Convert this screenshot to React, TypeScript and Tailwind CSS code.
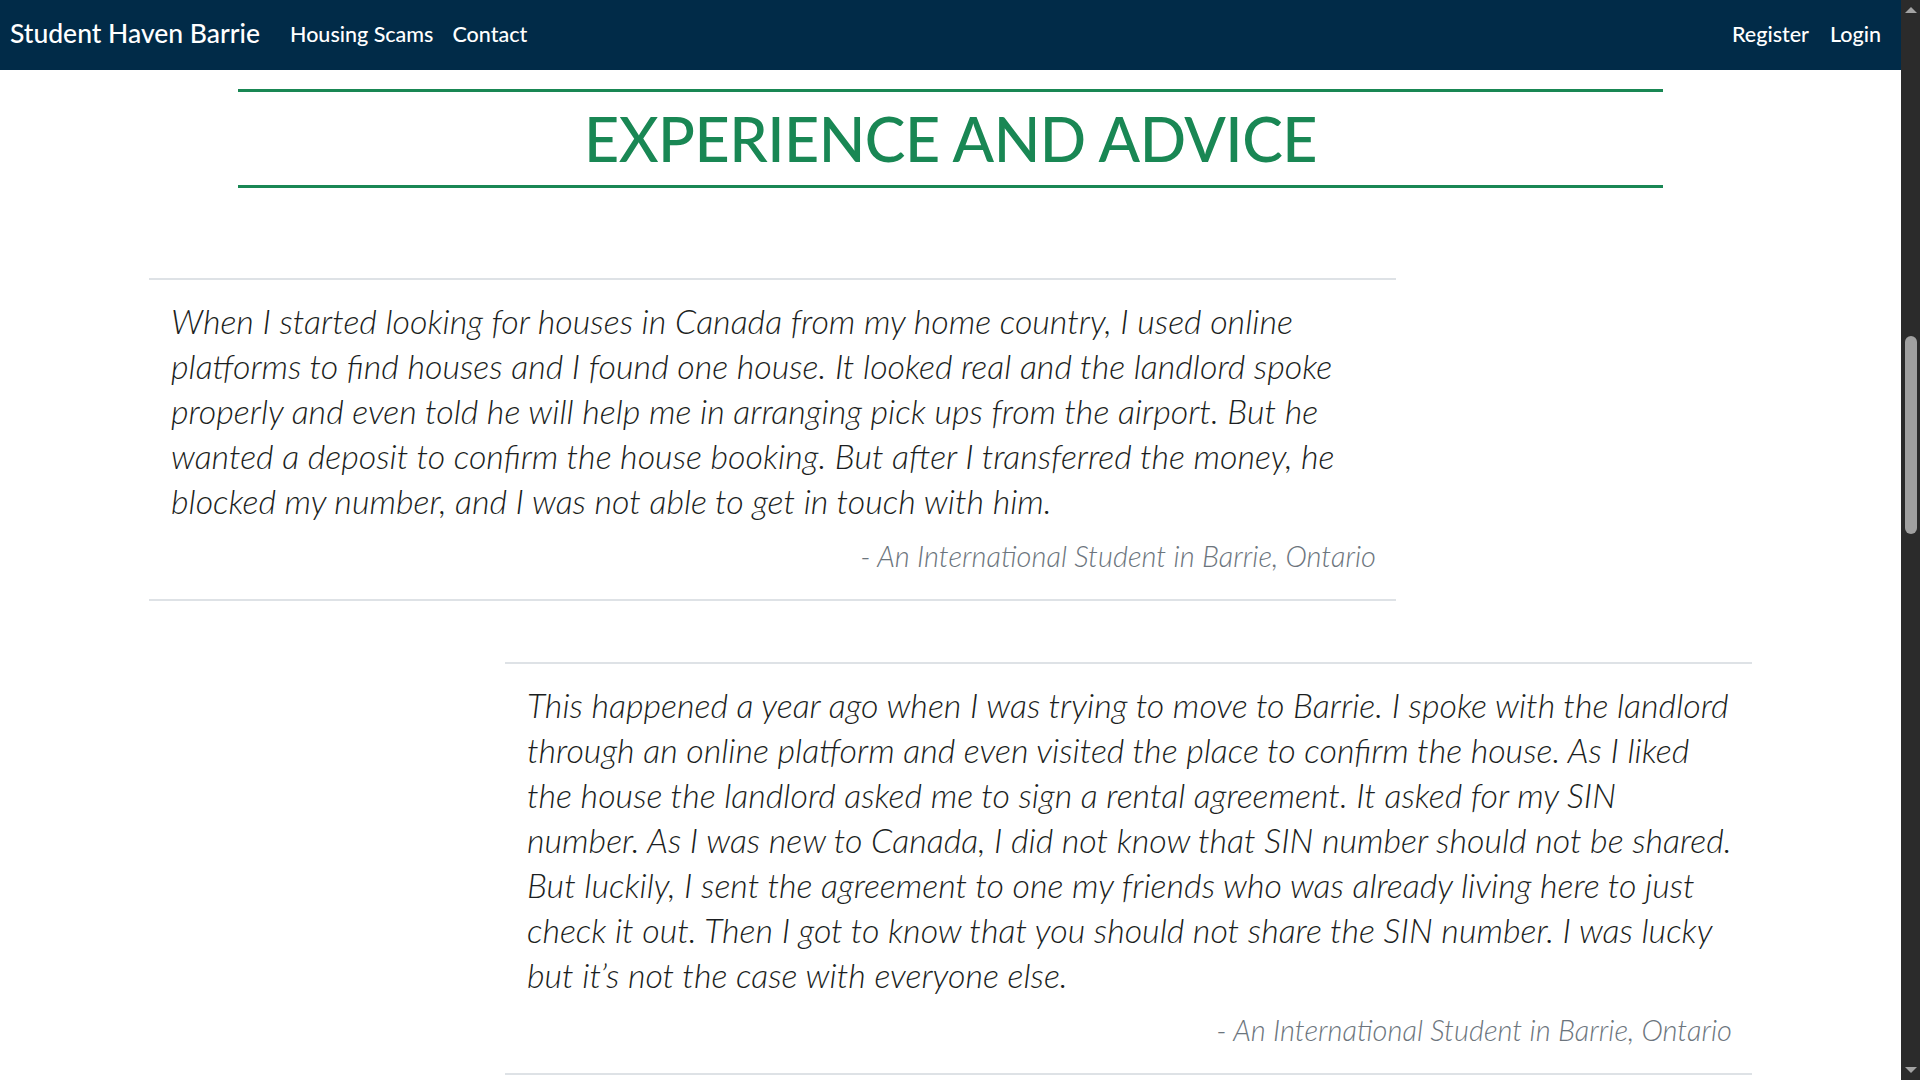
import React from "react";

const stories = [
  {
    lines: [
      "When I started looking for houses in Canada from my home country, I used online",
      "platforms to find houses and I found one house. It looked real and the landlord spoke",
      "properly and even told he will help me in arranging pick ups from the airport. But he",
      "wanted a deposit to confirm the house booking. But after I transferred the money, he",
      "blocked my number, and I was not able to get in touch with him.",
    ],
    side: "left",
  },
  {
    lines: [
      "This happened a year ago when I was trying to move to Barrie. I spoke with the landlord",
      "through an online platform and even visited the place to confirm the house. As I liked",
      "the house the landlord asked me to sign a rental agreement. It asked for my SIN",
      "number. As I was new to Canada, I did not know that SIN number should not be shared.",
      "But luckily, I sent the agreement to one my friends who was already living here to just",
      "check it out. Then I got to know that you should not share the SIN number. I was lucky",
      "but it\u2019s not the case with everyone else.",
    ],
    side: "right",
  },
];

function Navbar() {
  return (
    <nav className="h-[70px] shrink-0 bg-[#012b48] flex items-center justify-between pl-[10px] pr-[20px] pb-[2px] text-white">
      <div className="flex items-center">
        <a className="text-[26.5px] font-medium mr-[30px]">Student Haven Barrie</a>
        <div className="flex items-center gap-[19px] text-[21.5px] font-medium">
          <a>Housing Scams</a>
          <a>Contact</a>
        </div>
      </div>
      <div className="flex items-center gap-[21px] text-[21.5px] font-medium">
        <a>Register</a>
        <a>Login</a>
      </div>
    </nav>
  );
}

function Scrollbar() {
  return (
    <div className="w-[19px] h-full bg-[#2b2b2b] flex flex-col items-center justify-between py-[7px]">
      <div className="w-0 h-0 border-x-[6px] border-x-transparent border-b-[6px] border-b-[#a3a3a3]" />
      <div className="flex-1 w-full flex flex-col items-center pt-[323px]">
        <div className="w-[12px] h-[198px] rounded-full bg-[#a0a0a0]" />
      </div>
      <div className="w-0 h-0 border-x-[6px] border-x-transparent border-t-[6px] border-t-[#a3a3a3]" />
    </div>
  );
}

export default function App() {
  return (
    <div className="h-screen w-full flex overflow-hidden bg-white font-['Lato','Open_Sans',sans-serif]">
      <div className="flex-1 flex flex-col overflow-hidden">
        <Navbar />
        <main className="flex flex-col">
          <div className="mx-auto mt-[19px] w-[75%] border-y-[3px] border-[#198754] h-[99px] flex items-center justify-center">
            <h1 className="text-[61px] font-medium tracking-[-0.5px] text-[#198754] uppercase leading-none">
              Experience and Advice
            </h1>
          </div>
          <div className="px-[149px] mt-[90px] flex flex-col gap-[61px]">
            {stories.map((s, i) => (
              <blockquote
                key={i}
                className={
                  "w-[1247px] border-y-2 border-[#dee2e6] pt-[18px] pb-[25px] pl-[22px] pr-[20px] " +
                  (s.side === "right" ? "self-end" : "self-start")
                }
              >
                <p className="text-[34px] leading-[45px] italic font-light text-[#1b1e21] whitespace-nowrap">
                  {s.lines.map((line, j) => (
                    <React.Fragment key={j}>
                      {line}
                      {j < s.lines.length - 1 && <br />}
                    </React.Fragment>
                  ))}
                </p>
                <p className="mt-[15px] text-right text-[29px] leading-[36px] italic font-light text-[#6c757d]">
                  - An International Student in Barrie, Ontario
                </p>
              </blockquote>
            ))}
          </div>
        </main>
      </div>
      <Scrollbar />
    </div>
  );
}
